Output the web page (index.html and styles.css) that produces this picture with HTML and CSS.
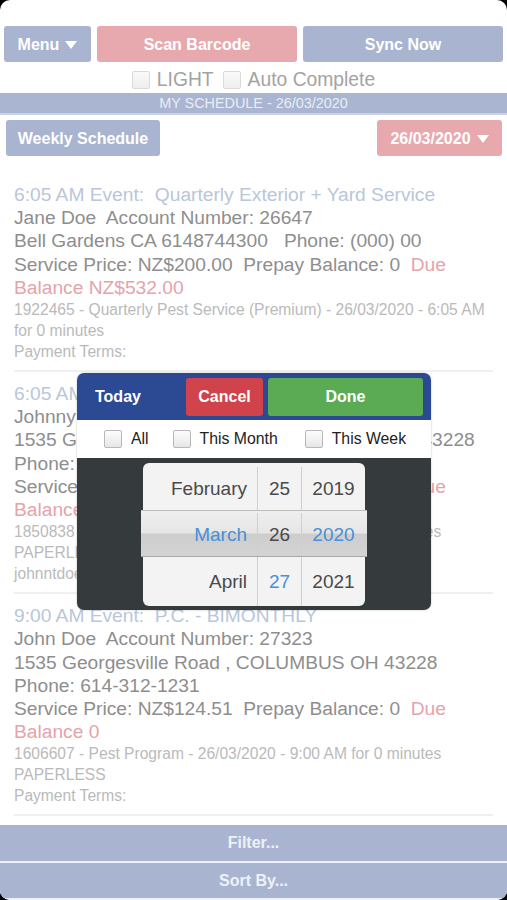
FILE: index.html
```html
<!DOCTYPE html>
<html>
	<head>
		<meta charset="UTF-8"/>
		<title>My Schedule</title>
		<link rel="stylesheet" href="styles.css">
	</head>
	<body>
		<div class="screen">
			<div class="toolbar">
				<span class="btn blue menu">Menu <i class="caret"></i></span>
				<span class="btn pink">Scan Barcode</span>
				<span class="btn blue">Sync Now</span>
			</div>
			<div class="options">
				<span class="box"></span> LIGHT
				<span class="box"></span> Auto Complete
			</div>
			<div class="schedule-bar">MY SCHEDULE - 26/03/2020</div>
			<div class="subbar">
				<span class="btn blue weekly">Weekly Schedule</span>
				<span class="btn pink date">26/03/2020 <i class="caret"></i></span>
			</div>
			<div class="events">
				<div class="event">
					<div class="title">6:05 AM Event:&nbsp; Quarterly Exterior + Yard Service</div>
					<div class="line">Jane Doe&nbsp; Account Number: 26647</div>
					<div class="line">Bell Gardens CA 6148744300 &nbsp; Phone: (000) 00</div>
					<div class="line">Service Price: NZ$200.00&nbsp; Prepay Balance: 0&nbsp; <span class="due">Due Balance NZ$532.00</span></div>
					<div class="small">1922465 - Quarterly Pest Service (Premium) - 26/03/2020 - 6:05 AM for 0 minutes</div>
					<div class="small terms">Payment Terms:</div>
				</div>
				<div class="event">
					<div class="title">6:05 AM Event:&nbsp; Quarterly Pest Service</div>
					<div class="line">Johnny Doe&nbsp; Account Number: 27324</div>
					<div class="line">1535 Georgesville Road #12 , COLUMBUS OH 43228</div>
					<div class="line">Phone: 614-312-1231</div>
					<div class="line">Service Price: NZ$124.51&nbsp; Prepay Balance: 0&nbsp; <span class="due">Due Balance 0</span></div>
					<div class="small">1850838 - Pest Program - 26/03/2020 - 6:05 AM for 0 minutes</div>
					<div class="small">PAPERLESS</div>
					<div class="small">johnntdoe@gmail.com</div>
				</div>
				<div class="event">
					<div class="title">9:00 AM Event:&nbsp; P.C. - BIMONTHLY</div>
					<div class="line">John Doe&nbsp; Account Number: 27323</div>
					<div class="line">1535 Georgesville Road , COLUMBUS OH 43228</div>
					<div class="line">Phone: 614-312-1231</div>
					<div class="line">Service Price: NZ$124.51&nbsp; Prepay Balance: 0&nbsp; <span class="due">Due Balance 0</span></div>
					<div class="small">1606607 - Pest Program - 26/03/2020 - 9:00 AM for 0 minutes</div>
					<div class="small">PAPERLESS</div>
					<div class="small terms">Payment Terms:</div>
				</div>
			</div>
			<div class="footer">
				<span class="foot-btn">Filter...</span>
				<span class="foot-btn">Sort By...</span>
			</div>

			<div class="picker-pop">
				<div class="pop-head">
					<span class="today">Today</span>
					<span class="pop-btn cancel">Cancel</span>
					<span class="pop-btn done">Done</span>
				</div>
				<div class="pop-checks">
					<label><span class="chk"></span>All</label>
					<label><span class="chk"></span>This Month</label>
					<label><span class="chk"></span>This Week</label>
				</div>
				<div class="pop-body">
					<div class="wheel">
						<div class="row">
							<span class="c-month">February</span><span class="c-day">25</span><span class="c-year">2019</span>
						</div>
						<div class="row sel">
							<span class="c-month hi">March</span><span class="c-day">26</span><span class="c-year hi">2020</span>
						</div>
						<div class="row">
							<span class="c-month">April</span><span class="c-day hi">27</span><span class="c-year">2021</span>
						</div>
					</div>
				</div>
			</div>
		</div>
	</body>
</html>
```

FILE: styles.css
```css
* {
	margin: 0;
	padding: 0;
	box-sizing: border-box;
}
html, body {
	background: #000;
}
body {
	width: 507px;
	height: 900px;
	font-family: "Liberation Sans", Arial, sans-serif;
}
.screen {
	position: relative;
	width: 507px;
	height: 900px;
	background: #fff;
	border-radius: 10px;
	overflow: hidden;
	display: flex;
	flex-direction: column;
}
.toolbar {
	display: flex;
	gap: 6px;
	padding: 26px 4px 0 4px;
}
.btn {
	display: flex;
	align-items: center;
	justify-content: center;
	height: 36px;
	padding-top: 1px;
	border-radius: 3px;
	color: #fff;
	font-weight: bold;
	font-size: 16px;
}
.btn.blue {
	background: #a9b4d1;
}
.btn.pink {
	background: #e8a9ae;
}
.toolbar .btn {
	flex: 1;
}
.toolbar .menu {
	flex: 0 0 87px;
}
.caret {
	display: inline-block;
	width: 0;
	height: 0;
	margin-left: 6px;
	border-left: 6px solid transparent;
	border-right: 6px solid transparent;
	border-top: 8px solid #fff;
}
.options {
	display: flex;
	align-items: center;
	justify-content: center;
	gap: 7px;
	height: 20px;
	margin-top: 8px;
	font-size: 19.3px;
	color: #a3a3a3;
}
.box {
	display: inline-block;
	width: 18px;
	height: 18px;
	border: 1px solid #dadada;
	border-radius: 2px;
	background: linear-gradient(#fafafa, #eee);
	margin-left: 2px;
}
.box:first-child {
	margin-left: 0;
}
.schedule-bar {
	margin-top: 3px;
	height: 22px;
	line-height: 21px;
	background: #a9b5d1;
	color: #e9edf6;
	font-size: 14.4px;
	text-align: center;
	border-bottom: 2px solid #c9d1e4;
}
.subbar {
	display: flex;
	justify-content: space-between;
	padding: 5px 5px 0 6px;
}
.weekly {
	width: 154px;
}
.date {
	width: 125px;
}
.events {
	flex: 1;
	overflow: hidden;
	padding: 27px 14px 0 14px;
}
.event {
	border-bottom: 2px solid #f0f0f0;
	padding-bottom: 8px;
	margin-bottom: 10px;
}
.title, .line {
	font-size: 19.2px;
	line-height: 23.2px;
	color: #8e8e8e;
}
.title {
	color: #b9c6db;
}
.due, .terms {
	color: #e5a3aa;
}
.small {
	font-size: 15.6px;
	line-height: 21px;
	color: #bababa;
}
.footer {
	display: flex;
	flex-direction: column;
	gap: 2px;
	padding-bottom: 2px;
	background: #eef1f8;
}
.foot-btn {
	display: block;
	height: 35px;
	line-height: 35px;
	text-align: center;
	background: #a9b4d1;
	color: #eef1f8;
	font-size: 16px;
	font-weight: bold;
}
.footer .foot-btn:first-child {
	margin-top: -1px;
	height: 36px;
}

/* date picker popup */
.picker-pop {
	position: absolute;
	left: 77px;
	top: 373px;
	width: 354px;
	height: 237px;
	border-radius: 7px;
	overflow: hidden;
	display: flex;
	flex-direction: column;
	box-shadow: 0 0 2px rgba(0,0,0,0.3);
}
.pop-head {
	display: flex;
	align-items: center;
	gap: 5px;
	height: 47px;
	padding: 5px 8px 4px 18px;
	background: #2c4a93;
}
.today {
	width: 86px;
	color: #fff;
	font-weight: bold;
	font-size: 16px;
}
.pop-btn {
	height: 38px;
	line-height: 38px;
	text-align: center;
	color: #fff;
	font-weight: bold;
	font-size: 16px;
	border-radius: 3px;
}
.cancel {
	width: 77px;
	background: #d1434b;
}
.done {
	flex: 1;
	background: #5bab55;
}
.pop-checks {
	display: flex;
	align-items: center;
	height: 38px;
	padding-left: 27px;
	background: #fff;
	font-size: 15.8px;
	color: #222;
}
.pop-checks label {
	display: flex;
	align-items: center;
	gap: 9px;
}
.pop-checks label:nth-child(2) {
	margin-left: 24px;
}
.pop-checks label:nth-child(3) {
	margin-left: 27px;
}
.chk {
	display: inline-block;
	width: 18px;
	height: 18px;
	border: 1px solid #b8b8b8;
	border-radius: 2px;
	background: linear-gradient(#fdfdfd, #e6e6e6);
}
.pop-body {
	flex: 1;
	display: flex;
	justify-content: center;
	padding: 5px 0 4px 0;
	background: #353b3d;
}
.wheel {
	width: 222px;
	border-radius: 6px;
	background: #f3f3f3;
	display: flex;
	flex-direction: column;
}
.row {
	display: flex;
	height: 47px;
	align-items: center;
	font-size: 19px;
	color: #4a4a4a;
}
.row:first-child {
	border-radius: 6px 6px 0 0;
	padding-top: 4px;
}
.row:last-child {
	height: 49px;
}
.row span {
	height: 100%;
	display: flex;
	align-items: center;
	border-right: 1px solid #cfcfcf;
}
.row span:last-child {
	border-right: 0;
}
.c-month {
	width: 115px;
	justify-content: flex-end;
	padding-right: 10px;
}
.c-day {
	width: 44px;
	justify-content: center;
}
.c-year {
	flex: 1;
	justify-content: center;
}
.row.sel {
	margin: 0 -2px;
	padding: 2px 2px 0 2px;
	background: linear-gradient(#efefef 0%, #e6e6e6 48%, #cdcdcd 52%, #d4d4d4 100%);
	border-top: 1px solid #bdbdbd;
	border-bottom: 1px solid #a9a9a9;
}
.hi {
	color: #4a8fd8;
}
```
